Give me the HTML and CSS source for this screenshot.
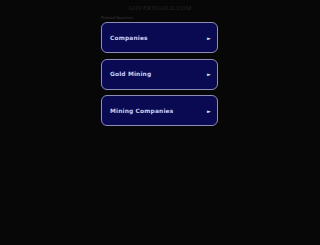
FILE: index.html
```html
<!DOCTYPE html>
<html>
<head>
<meta charset="utf-8">
<link rel="stylesheet" href="styles.css">
</head>
<body>
<div class="page">
  <div class="domain">GOVERNGOLD.COM</div>
  <div class="col">
    <div class="label">Related Searches</div>
    <a class="item" href="#"><span>Companies</span><span class="arr">&#9658;</span></a>
    <a class="item" href="#"><span>Gold Mining</span><span class="arr">&#9658;</span></a>
    <a class="item" href="#"><span>Mining Companies</span><span class="arr">&#9658;</span></a>
  </div>
</div>
</body>
</html>
```
FILE: styles.css
```css
html, body {
  margin: 0;
  padding: 0;
  background: #070707;
  height: 100%;
}
.page {
  display: flex;
  flex-direction: column;
  align-items: center;
  padding-top: 4px;
}
.domain {
  font-family: "Liberation Serif", serif;
  font-size: 6.5px;
  line-height: 7px;
  color: #262626;
  letter-spacing: 0.1px;
}
.col {
  width: 117px;
  display: flex;
  flex-direction: column;
  gap: 5.5px;
  margin-left: -1px;
}
.label {
  font-family: "Liberation Sans", sans-serif;
  font-size: 4px;
  line-height: 5px;
  color: #3a3a3a;
  margin-top: 3.5px;
  margin-bottom: -3px;
}
.item {
  box-sizing: border-box;
  height: 31px;
  border: 1px solid #8d8db8;
  border-radius: 6px;
  background: #0a0a52;
  display: flex;
  align-items: center;
  justify-content: space-between;
  padding: 0 6px 0 8px;
  text-decoration: none;
  font-family: "DejaVu Sans", sans-serif;
  font-weight: bold;
  font-size: 5.9px;
  letter-spacing: 0.15px;
  color: #c9d0f2;
}
.arr {
  font-size: 5px;
  color: #dfe4ff;
}
```
